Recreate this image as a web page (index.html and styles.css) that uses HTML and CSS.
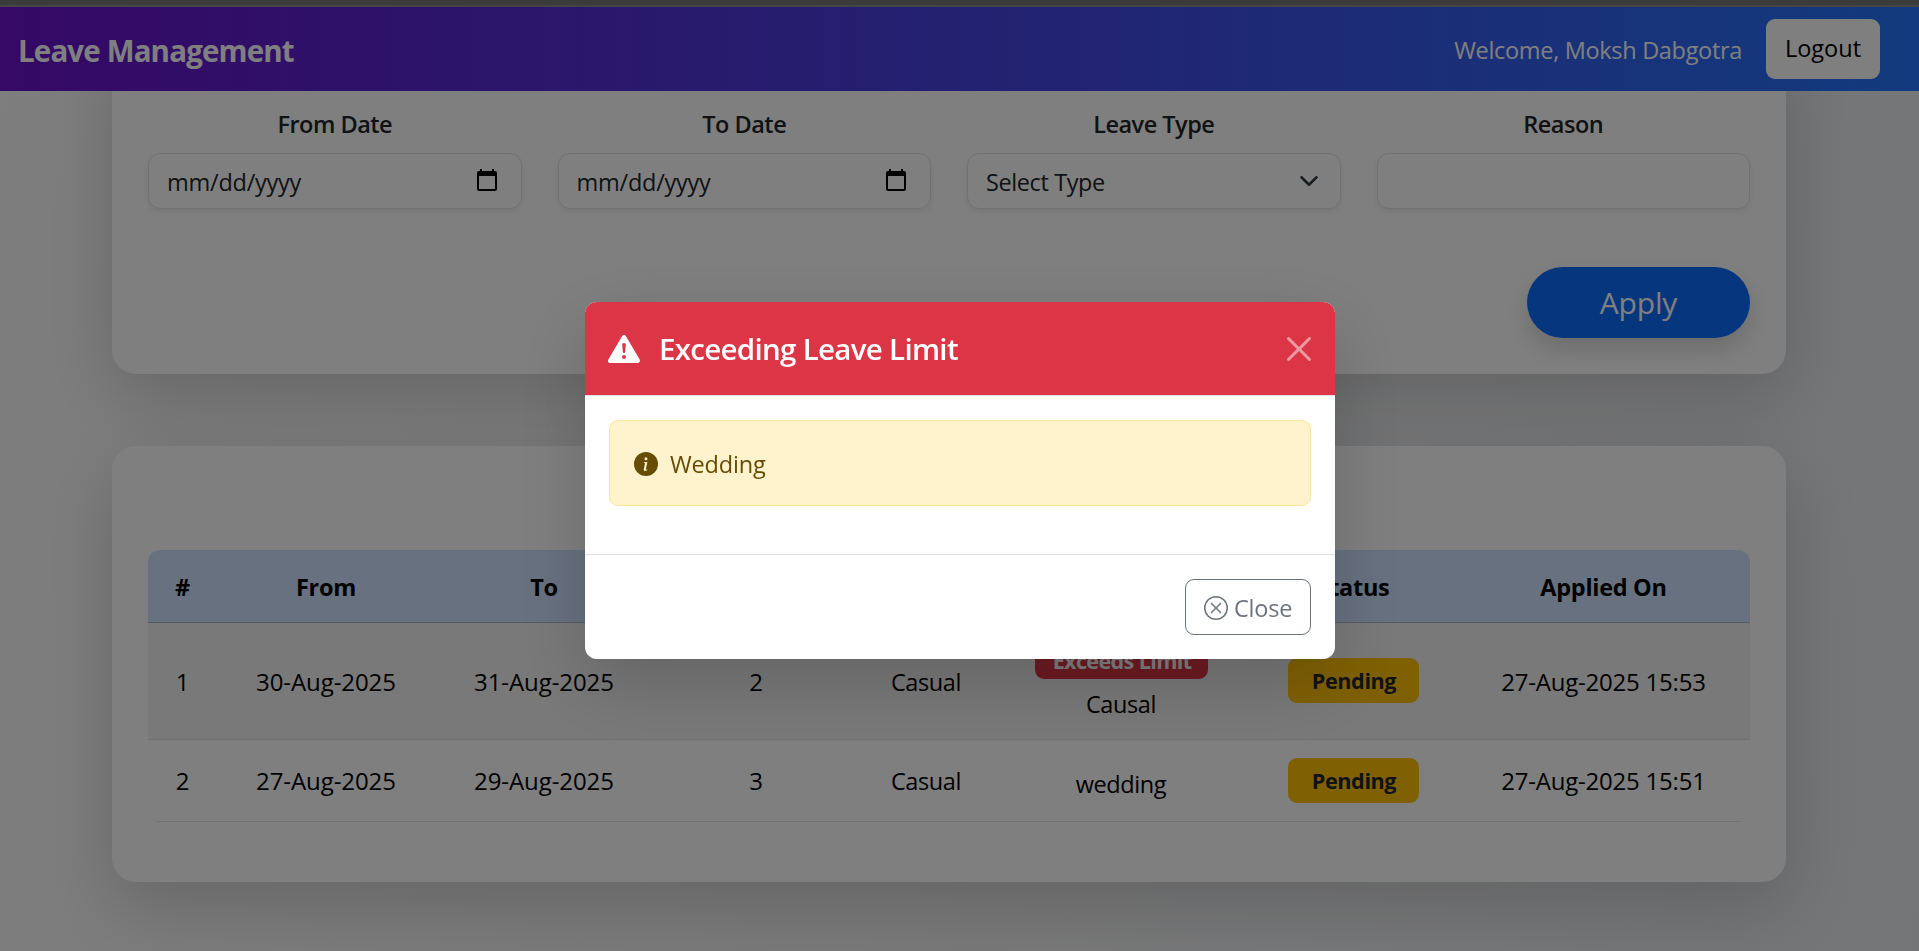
FILE: index.html
```html
<!DOCTYPE html>
<html lang="en">
<head>
<meta charset="utf-8">
<title>Leave Management</title>
<link rel="stylesheet" href="styles.css">
</head>
<body>
<header class="topbar">
  <nav class="navbar">
    <span class="brand">Leave Management</span>
    <div class="user">
      <span class="welcome">Welcome, Moksh Dabgotra</span>
      <button class="logout">Logout</button>
    </div>
  </nav>
</header>
<main class="content">
  <section class="card form-card">
    <div class="fields">
      <div class="field"><label class="label">From Date</label>
        <div class="control"><span>mm/dd/yyyy</span><svg class="calendar" viewBox="0 0 20 22"><path fill="#000" fill-rule="evenodd" d="M3 0h2v2h10V0h2v2h1a2 2 0 0 1 2 2v16a2 2 0 0 1-2 2H2a2 2 0 0 1-2-2V4a2 2 0 0 1 2-2h1zM2 7v13h16V7z"/></svg></div></div>
      <div class="field"><label class="label">To Date</label>
        <div class="control"><span>mm/dd/yyyy</span><svg class="calendar" viewBox="0 0 20 22"><path fill="#000" fill-rule="evenodd" d="M3 0h2v2h10V0h2v2h1a2 2 0 0 1 2 2v16a2 2 0 0 1-2 2H2a2 2 0 0 1-2-2V4a2 2 0 0 1 2-2h1zM2 7v13h16V7z"/></svg></div></div>
      <div class="field"><label class="label">Leave Type</label>
        <div class="control"><span class="select-text">Select Type</span><svg class="chevron" viewBox="0 0 16 16"><path fill="none" stroke="#343a40" stroke-linecap="round" stroke-linejoin="round" stroke-width="2" d="m2 5 6 6 6-6"/></svg></div></div>
      <div class="field"><label class="label">Reason</label>
        <div class="control"></div></div>
    </div>
    <div class="actions"><button class="apply">Apply</button></div>
  </section>
  <section class="card table-card">
    <div class="table-wrap">
      <table class="table">
        <colgroup><col class="c-num"><col class="c-date"><col class="c-date"><col class="c-days"><col class="c-type"><col class="c-reason"><col class="c-status"><col class="c-applied"></colgroup>
        <thead><tr><th>#</th><th>From</th><th>To</th><th></th><th></th><th></th><th>Status</th><th>Applied On</th></tr></thead>
        <tbody>
          <tr class="odd"><td>1</td><td>30-Aug-2025</td><td>31-Aug-2025</td><td>2</td><td class="word">Casual</td><td class="word"><div class="reason"><span class="badge danger">Exceeds Limit</span><span>Causal</span></div></td><td class="status"><span class="badge warning">Pending</span></td><td class="stamp">27-Aug-2025 15:53</td></tr>
          <tr class="even"><td>2</td><td>27-Aug-2025</td><td>29-Aug-2025</td><td>3</td><td class="word">Casual</td><td class="word low">wedding</td><td class="status"><span class="badge warning">Pending</span></td><td class="stamp">27-Aug-2025 15:51</td></tr>
        </tbody>
      </table>
    </div>
  </section>
</main>
<div class="backdrop">
  <div class="modal">
    <div class="modal-header">
      <svg class="warn" viewBox="0 0 16 16"><path fill="#fff" d="M8.982 1.566a1.13 1.13 0 0 0-1.96 0L.165 13.233c-.457.778.091 1.767.98 1.767h13.713c.889 0 1.438-.99.98-1.767zM8 5c.535 0 .954.462.9.995l-.35 3.507a.552.552 0 0 1-1.1 0L7.1 5.995A.905.905 0 0 1 8 5m.002 6a1 1 0 1 1 0 2 1 1 0 0 1 0-2"/></svg>
      <h5 class="modal-title">Exceeding Leave Limit</h5>
      <svg class="close-x" viewBox="0 0 16 16"><path fill="#fff" d="M.293.293a1 1 0 0 1 1.414 0L8 6.586 14.293.293a1 1 0 1 1 1.414 1.414L9.414 8l6.293 6.293a1 1 0 0 1-1.414 1.414L8 9.414l-6.293 6.293a1 1 0 0 1-1.414-1.414L6.586 8 .293 1.707a1 1 0 0 1 0-1.414"/></svg>
    </div>
    <div class="modal-body">
      <div class="alert">
        <svg class="icon" viewBox="0 0 16 16"><path fill="currentColor" d="M8 16A8 8 0 1 0 8 0a8 8 0 0 0 0 16m.93-9.412-1 4.705c-.07.34.029.533.304.533.194 0 .487-.07.686-.246l-.088.416c-.287.346-.92.598-1.465.598-.703 0-1.002-.422-.808-1.319l.738-3.468c.064-.293.006-.399-.287-.47l-.451-.081.082-.381 2.29-.287zM8 5.5a1 1 0 1 1 0-2 1 1 0 0 1 0 2"/></svg>
        <span>Wedding</span>
      </div>
    </div>
    <div class="modal-footer">
      <button class="close-btn"><svg class="icon" viewBox="0 0 16 16"><path fill="currentColor" d="M8 15A7 7 0 1 1 8 1a7 7 0 0 1 0 14m0 1A8 8 0 1 0 8 0a8 8 0 0 0 0 16"/><path fill="currentColor" d="M4.646 4.646a.5.5 0 0 1 .708 0L8 7.293l2.646-2.647a.5.5 0 0 1 .708.708L8.707 8l2.647 2.646a.5.5 0 0 1-.708.708L8 8.707l-2.646 2.647a.5.5 0 0 1-.708-.708L7.293 8 4.646 5.354a.5.5 0 0 1 0-.708"/></svg><span>Close</span></button>
    </div>
  </div>
</div>
</body>
</html>
```

FILE: styles.css
```css
* { box-sizing: border-box; }

body {
  margin: 0;
  height: 951px;
  overflow: hidden;
  font: 23.5px/36px "Open Sans", "Noto Sans", sans-serif;
  color: #212529;
  background: linear-gradient(100deg, #fdfcfc, #e9ebee);
}

button { font: inherit; }

/* Navbar */
.topbar { position: relative; z-index: 2; padding-top: 5px; background: #777; }
.navbar {
  height: 86px;
  padding: 0 39px 0 18px;
  display: flex;
  align-items: center;
  justify-content: space-between;
  background: linear-gradient(90deg, #6a11cb, #2575fc) padding-box;
  border-top: 2px solid #8c8c8c;
  color: #fff;
}
.brand { padding-top: 3px; font-size: 29.5px; font-weight: 700; letter-spacing: -0.85px; }
.user { display: flex; align-items: center; gap: 24px; }
.welcome { padding-top: 2px; letter-spacing: -0.32px; }
.logout { width: 114px; height: 60px; padding: 0 0 2px; border: 0; border-radius: 9px; background: #fff; color: #000; }

/* Cards */
.content { padding: 0 133px 0 112px; }
.card { background: #fff; border-radius: 24px; padding: 0 36px; box-shadow: 0 24px 72px rgba(0, 0, 0, .175); }

/* Leave form */
.form-card { margin-top: -60px; height: 343px; padding-top: 75px; }
.fields { display: grid; grid-template-columns: repeat(4, 1fr); gap: 36px; }
.field { display: flex; flex-direction: column; gap: 11px; }
.label { font-weight: 600; text-align: center; letter-spacing: -0.5px; }
.control {
  height: 56px;
  border: 1px solid #dee2e6;
  border-radius: 12px;
  padding: 0 24px 0 18px;
  display: flex;
  align-items: center;
  justify-content: space-between;
  letter-spacing: -0.25px;
  box-shadow: 0 3px 6px rgba(0, 0, 0, .075);
}
.control span { padding-top: 2px; }
.control .select-text { letter-spacing: -0.4px; }
.calendar { width: 20px; height: 22px; margin-bottom: 2px; }
.chevron { width: 20px; height: 20px; margin-right: -3px; }
.actions { display: flex; justify-content: flex-end; margin-top: 58px; }
.apply {
  width: 223px;
  height: 71px;
  padding: 1px 0 0;
  border: 0;
  border-radius: 36px;
  background: #0d6efd;
  color: #fff;
  font-size: 30px;
  letter-spacing: -0.2px;
  box-shadow: 0 12px 24px rgba(0, 0, 0, .15);
}

/* Leave history */
.table-card { margin-top: 72px; height: 436px; padding-top: 104px; }
.table-wrap { border-radius: 12px; overflow: hidden; }
.table {
  width: 100%;
  table-layout: fixed;
  border-collapse: separate;
  border-spacing: 0;
  color: #000;
  text-align: center;
  font-size: 24px;
}
.c-num { width: 69px; }
.c-date { width: 218px; }
.c-days { width: 206px; }
.c-type { width: 134px; }
.c-reason { width: 256px; }
.c-status { width: 208px; }
th, td { padding: 0; }
th {
  height: 73px;
  padding-top: 2px;
  background: #cfe2ff;
  border-bottom: 1px solid #a6b5cc;
  font-size: 23.5px;
  letter-spacing: -0.3px;
}
td { border-bottom: 1px solid #dee2e6; letter-spacing: -0.08px; }
.odd td { height: 117px; padding-top: 2px; background: #f2f2f2; }
.even td { height: 82px; }
td.word { font-size: 23.5px; letter-spacing: -0.4px; }
td.low { padding-top: 6px; }
td.stamp { letter-spacing: -0.22px; }
.odd td.status { padding: 0 0 1px; }
.even td.status { padding: 0; }
.status .badge { vertical-align: middle; }
.reason { display: flex; flex-direction: column; align-items: center; gap: 7px; padding-bottom: 8px; }
.badge {
  display: inline-flex;
  align-items: center;
  justify-content: center;
  height: 45px;
  padding: 1px 0 0 2px;
  border-radius: 9px;
  font-size: 21.6px;
  font-weight: 700;
}
.danger { width: 173px; padding-top: 8px; background: #dc3545; color: #fff; letter-spacing: -0.65px; }
.warning { width: 131px; background: #ffc107; color: #212529; letter-spacing: -0.4px; }

/* Modal */
.backdrop {
  position: fixed;
  inset: 0;
  z-index: 5;
  display: flex;
  align-items: flex-start;
  justify-content: center;
  padding: 302px 0 0 1px;
  background: rgba(0, 0, 0, .5);
}
.modal {
  width: 750px;
  height: 357px;
  display: flex;
  flex-direction: column;
  border-radius: 12px;
  overflow: hidden;
  background: #fff;
  box-shadow: 0 24px 72px rgba(0, 0, 0, .175);
}
.modal-header {
  height: 94px;
  padding: 0 24px 0 23px;
  display: flex;
  align-items: center;
  background: #dc3545;
  border-bottom: 1px solid #dee2e6;
  color: #fff;
}
.warn { width: 32px; height: 32px; }
.modal-title { margin: 0 auto 0 19px; padding-top: 1px; font-size: 29.5px; font-weight: 650; letter-spacing: -0.7px; }
.close-x { width: 24px; height: 24px; opacity: .5; }
.modal-body { flex: 1; padding: 24px; }
.alert {
  height: 86px;
  padding: 0 24px;
  display: flex;
  align-items: center;
  gap: 12px;
  border: 1px solid #ffe69c;
  border-radius: 9px;
  background: #fff3cd;
  color: #664d03;
  letter-spacing: -0.15px;
}
.icon { width: 24px; height: 24px; }
.alert .icon { margin-top: 1px; }
.alert span, .close-btn span { padding-top: 2px; }
.modal-footer { height: 105px; padding: 24px; display: flex; justify-content: flex-end; border-top: 1px solid #dee2e6; }
.close-btn {
  width: 126px;
  height: 56px;
  padding: 0 0 0 18px;
  display: flex;
  align-items: center;
  gap: 6px;
  border: 1px solid #6c757d;
  border-radius: 9px;
  background: none;
  color: #6c757d;
  letter-spacing: -0.2px;
}
.close-btn .icon { margin-top: 1px; }
```
